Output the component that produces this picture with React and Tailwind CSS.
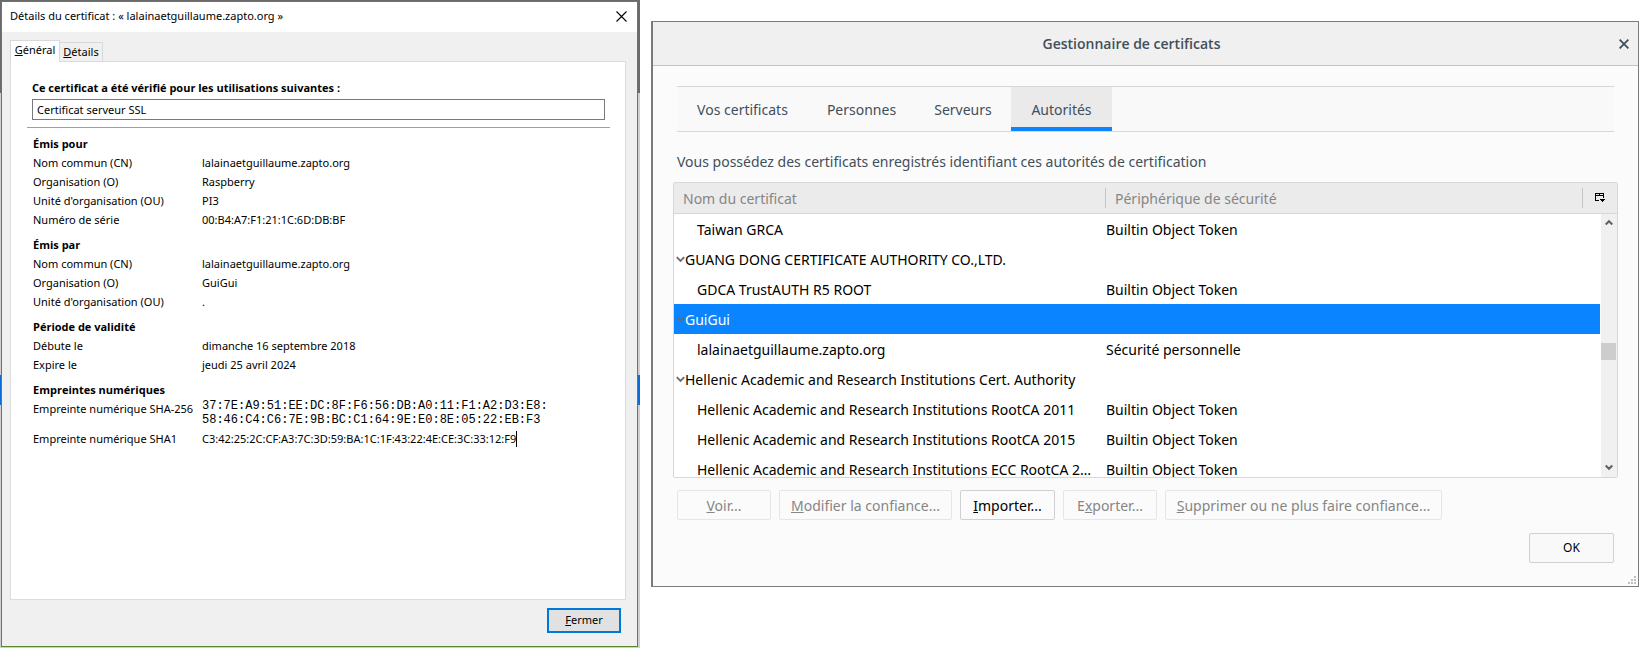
const details = [
  {
    title: 'Émis pour',
    rows: [
      ['Nom commun (CN)', 'lalainaetguillaume.zapto.org'],
      ['Organisation (O)', 'Raspberry'],
      ["Unité d'organisation (OU)", 'PI3'],
      ['Numéro de série', '00:B4:A7:F1:21:1C:6D:DB:BF'],
    ],
  },
  {
    title: 'Émis par',
    rows: [
      ['Nom commun (CN)', 'lalainaetguillaume.zapto.org'],
      ['Organisation (O)', 'GuiGui'],
      ["Unité d'organisation (OU)", '.'],
    ],
  },
  {
    title: 'Période de validité',
    rows: [
      ['Débute le', 'dimanche 16 septembre 2018'],
      ['Expire le', 'jeudi 25 avril 2024'],
    ],
  },
];

const certs = [
  { name: 'Taiwan GRCA', device: 'Builtin Object Token' },
  { name: 'GUANG DONG CERTIFICATE AUTHORITY CO.,LTD.', group: true },
  { name: 'GDCA TrustAUTH R5 ROOT', device: 'Builtin Object Token' },
  { name: 'GuiGui', group: true, selected: true },
  { name: 'lalainaetguillaume.zapto.org', device: 'Sécurité personnelle' },
  { name: 'Hellenic Academic and Research Institutions Cert. Authority', group: true },
  { name: 'Hellenic Academic and Research Institutions RootCA 2011', device: 'Builtin Object Token' },
  { name: 'Hellenic Academic and Research Institutions RootCA 2015', device: 'Builtin Object Token' },
  { name: 'Hellenic Academic and Research Institutions ECC RootCA 2015', device: 'Builtin Object Token' },
];

function Heading({ children }) {
  return <h2 className='font-["Open_Sans",sans-serif] leading-[19px] font-bold'>{children}</h2>;
}

function CertificateDetails() {
  return (
    <div className="flex w-[640px] shrink-0 bg-[linear-gradient(#6b6b6b_0_93px,#cfcfcf_93px_375px,#0a6cd6_375px_405px,#cfcfcf_405px)] pt-px pr-[2px] pb-px pl-px">
      <section className="flex min-w-0 flex-1 flex-col border border-[#5b8a2b] bg-[#f0f0f0] text-[11px] text-black">
        <header className="flex h-[30px] items-center justify-between bg-white pr-[6px] pb-px pl-2">
          <h1>Détails du certificat : « lalainaetguillaume.zapto.org »</h1>
          <button type="button" aria-label="Fermer la fenêtre" className="p-1">
            <svg width="11" height="11" viewBox="0 0 11 11" stroke="#000" strokeWidth="1.1" fill="none">
              <path d="M.5.5l10 10M10.5.5l-10 10" />
            </svg>
          </button>
        </header>
        <div className="flex flex-1 flex-col px-2 pt-2">
          <div role="tablist" className="flex items-end">
            <button type="button" role="tab" aria-selected="true" className="relative -mb-px h-[22px] w-[50px] border border-b-0 border-[#d9d9d9] bg-white pb-1 leading-4">
              <u>G</u>énéral
            </button>
            <button type="button" role="tab" aria-selected="false" className="h-[19px] w-[43px] border border-b-0 border-l-0 border-[#d9d9d9] bg-[#f0f0f0] leading-4">
              <u>D</u>étails
            </button>
          </div>
          <div role="tabpanel" className="mr-[3px] h-[539px] border border-[#dcdcdc] bg-white pt-4 pr-[15px] pl-4">
            <div className="border-b border-[#a0a0a0] pr-[5px] pb-[7px] pl-[5px]">
              <label htmlFor="usage" className='block pb-px font-["Open_Sans",sans-serif] leading-5 font-bold'>
                Ce certificat a été vérifié pour les utilisations suivantes :
              </label>
              <input id="usage" readOnly value="Certificat serveur SSL" className="block h-[21px] w-full border border-[#7a7a7a] bg-white px-1" />
            </div>
            <div className="flex flex-col gap-[6px] pt-[6px] pl-[6px]">
              {details.map((s) => (
                <div key={s.title}>
                  <Heading>{s.title}</Heading>
                  <dl className="grid grid-cols-[169px_1fr] leading-[19px]">
                    {s.rows.map(([k, v]) => [<dt key={k}>{k}</dt>, <dd key={k + 'v'}>{v}</dd>])}
                  </dl>
                </div>
              ))}
              <div>
                <Heading>Empreintes numériques</Heading>
                <dl className="grid grid-cols-[169px_1fr] gap-y-[2px] leading-[19px]">
                  <dt className="whitespace-nowrap">Empreinte numérique SHA-256</dt>
                  <dd className='font-["Liberation_Mono",monospace] text-[12px] leading-[14px]'>
                    37:7E:A9:51:EE:DC:8F:F6:56:DB:A0:11:F1:A2:D3:E8:
                    <br />
                    58:46:C4:C6:7E:9B:BC:C1:64:9E:E0:8E:05:22:EB:F3
                  </dd>
                  <dt>Empreinte numérique SHA1</dt>
                  <dd className="flex items-center">
                    C3:42:25:2C:CF:A3:7C:3D:59:BA:1C:1F:43:22:4E:CE:3C:33:12:F9
                    <span className="h-4 w-px bg-black" />
                  </dd>
                </dl>
              </div>
            </div>
          </div>
          <footer className="flex justify-end pt-2 pr-2">
            <button type="button" className="mb-[13px] h-[25px] w-[74px] border-2 border-[#0078d7] bg-[#e1e1e1]">
              <u>F</u>ermer
            </button>
          </footer>
        </div>
      </section>
    </div>
  );
}

function Twisty() {
  return (
    <svg className="shrink-0" width="9" height="7" viewBox="0 0 9 7" fill="none" stroke="#6a6a6a" strokeWidth="1.8">
      <path d="M.8 1.2L4.5 4.9 8.2 1.2" />
    </svg>
  );
}

function ScrollArrow({ up }) {
  return (
    <svg width="8" height="7" viewBox="0 0 8 7" fill="none" stroke="#606060" strokeWidth="2">
      <path d={up ? 'M.7 5.5L4 2.2 7.3 5.5' : 'M.7 1.5L4 4.8 7.3 1.5'} />
    </svg>
  );
}

function Tab({ children, active, width }) {
  return (
    <button
      type="button"
      role="tab"
      aria-selected={!!active}
      className={`${width} border-b-4 ${active ? 'border-[#0a84ff] bg-[#eaeaea]' : 'border-transparent'} pt-1 text-center`}
    >
      {children}
    </button>
  );
}

function Action({ hot, rest, before = '', width, enabled }) {
  return (
    <button
      type="button"
      disabled={!enabled}
      className={`${width} h-[30px] rounded-[2px] border whitespace-nowrap ${enabled ? 'border-[#d0d0d4] text-black' : 'border-[#e6e6e7] text-[#868686]'}`}
    >
      {before}
      <u>{hot}</u>
      {rest}
    </button>
  );
}

function CertificateTable() {
  return (
    <div className="-mx-1 h-[296px] overflow-hidden rounded-[2px] border border-[#d7d7db] bg-white">
      <table className="w-full table-fixed border-separate border-spacing-0 text-left text-black">
        <colgroup>
          <col className="w-[432px]" />
          <col />
          <col className="w-[17px]" />
          <col className="w-[17px]" />
        </colgroup>
        <thead className="bg-[#ebebeb] text-[#868686]">
          <tr>
            <th className="h-[31px] border-b border-[#d7d7db] p-0 font-normal">
              <div className="flex h-5 items-center border-r border-[#c4c4c4] pl-[9px]">Nom du certificat</div>
            </th>
            <th className="border-b border-[#d7d7db] p-0 font-normal">
              <div className="flex h-5 items-center border-r border-[#c4c4c4] pl-[9px]">Périphérique de sécurité</div>
            </th>
            <th colSpan={2} className="border-b border-[#d7d7db] p-0">
              <button type="button" aria-label="Choisir les colonnes" className="flex h-5 w-full items-center justify-center">
                <svg width="10" height="10" viewBox="0 0 10 10" shapeRendering="crispEdges" fill="#000">
                  <path d="M0 0h9v1H0zM0 0h1v8H0zM8 0h1v5H8zM0 2h9v1H0zM4 0h1v3H4zM0 7h4v1H0zM5 6h5v1H5zM6 7h3v1H6zM7 8h1v1H7z" />
                </svg>
              </button>
            </th>
          </tr>
        </thead>
        <tbody>
          {certs.map((c, i) => {
            const tone = c.selected ? 'bg-[#0a84ff] text-white' : '';
            return (
              <tr key={c.name}>
                <td className={`h-[30px] p-0 ${tone}`}>
                  {c.group ? (
                    <div className="flex items-center pl-[2px] whitespace-nowrap">
                      <Twisty />
                      {c.name}
                    </div>
                  ) : (
                    <div className="truncate pr-2 pl-[23px]">{c.name}</div>
                  )}
                </td>
                <td className={`p-0 ${tone}`}>{c.device}</td>
                <td className={`p-0 ${tone}`} />
                {i === 0 && (
                  <td rowSpan={certs.length} className="border-l border-white bg-[#f0f0f0] p-0 align-top">
                    <div className="flex h-[263px] flex-col items-center pt-[5px] pb-[6px]">
                      <ScrollArrow up />
                      <div className="flex w-full flex-1 flex-col pt-[117px]">
                        <div className="h-[17px] w-[15px] bg-[#cdcdcd]" />
                      </div>
                      <ScrollArrow />
                    </div>
                  </td>
                )}
              </tr>
            );
          })}
        </tbody>
      </table>
    </div>
  );
}

function CertificateManager() {
  return (
    <section className="mt-[21px] mr-[5px] flex h-[566px] min-w-0 flex-1 flex-col border border-l-2 border-[#7b7b7b] bg-[#fbfbfb] text-[14px] text-[#424f5a]">
      <header className="flex h-[44px] shrink-0 items-center border-b border-[#c2c2c2] bg-[#f0f0f0] pr-2">
        <h1 className='flex-1 pr-2 text-center font-["Open_Sans",sans-serif] font-semibold'>Gestionnaire de certificats</h1>
        <button type="button" aria-label="Fermer" className="p-px">
          <svg width="10" height="10" viewBox="0 0 10 10" stroke="#424f5a" strokeWidth="1.8" fill="none">
            <path d="M.6.6l8.8 8.8M9.4.6L.6 9.4" />
          </svg>
        </button>
      </header>
      <div className="flex flex-1 flex-col px-6 pt-5">
        <div role="tablist" className="flex h-[46px] border-y border-[#d7d7db] bg-[#f9f9fa]">
          <Tab width="w-[131px]">Vos certificats</Tab>
          <Tab width="w-[107px]">Personnes</Tab>
          <Tab width="w-[96px]">Serveurs</Tab>
          <Tab width="w-[101px]" active>Autorités</Tab>
        </div>
        <p className="pt-5 pb-[10px] leading-[20px]">Vous possédez des certificats enregistrés identifiant ces autorités de certification</p>
        <CertificateTable />
        <div className="flex gap-2 pt-3">
          <Action width="w-[94px]" hot="V" rest="oir..." />
          <Action width="w-[173px]" hot="M" rest="odifier la confiance..." />
          <Action width="w-[95px]" hot="I" rest="mporter..." enabled />
          <Action width="w-[94px]" before="E" hot="x" rest="porter..." />
          <Action width="w-[277px]" hot="S" rest="upprimer ou ne plus faire confiance..." />
        </div>
        <div className="flex justify-end pt-[13px]">
          <button type="button" className="h-[30px] w-[85px] rounded-[2px] border border-[#d0d0d4] bg-[#f9f9fa] text-[12px] text-black">
            OK
          </button>
        </div>
      </div>
      <div className="flex justify-end pr-[2px] pb-[2px]">
        <svg width="8" height="8" viewBox="0 0 8 8" fill="#bfbfbf" shapeRendering="crispEdges">
          <path d="M6 0h2v2H6zM6 3h2v2H6zM3 3h2v2H3zM6 6h2v2H6zM3 6h2v2H3zM0 6h2v2H0z" />
        </svg>
      </div>
    </section>
  );
}

export default function App() {
  return (
    <main className='flex items-start gap-[11px] bg-white font-["Noto_Sans",sans-serif]'>
      <CertificateDetails />
      <CertificateManager />
    </main>
  );
}
